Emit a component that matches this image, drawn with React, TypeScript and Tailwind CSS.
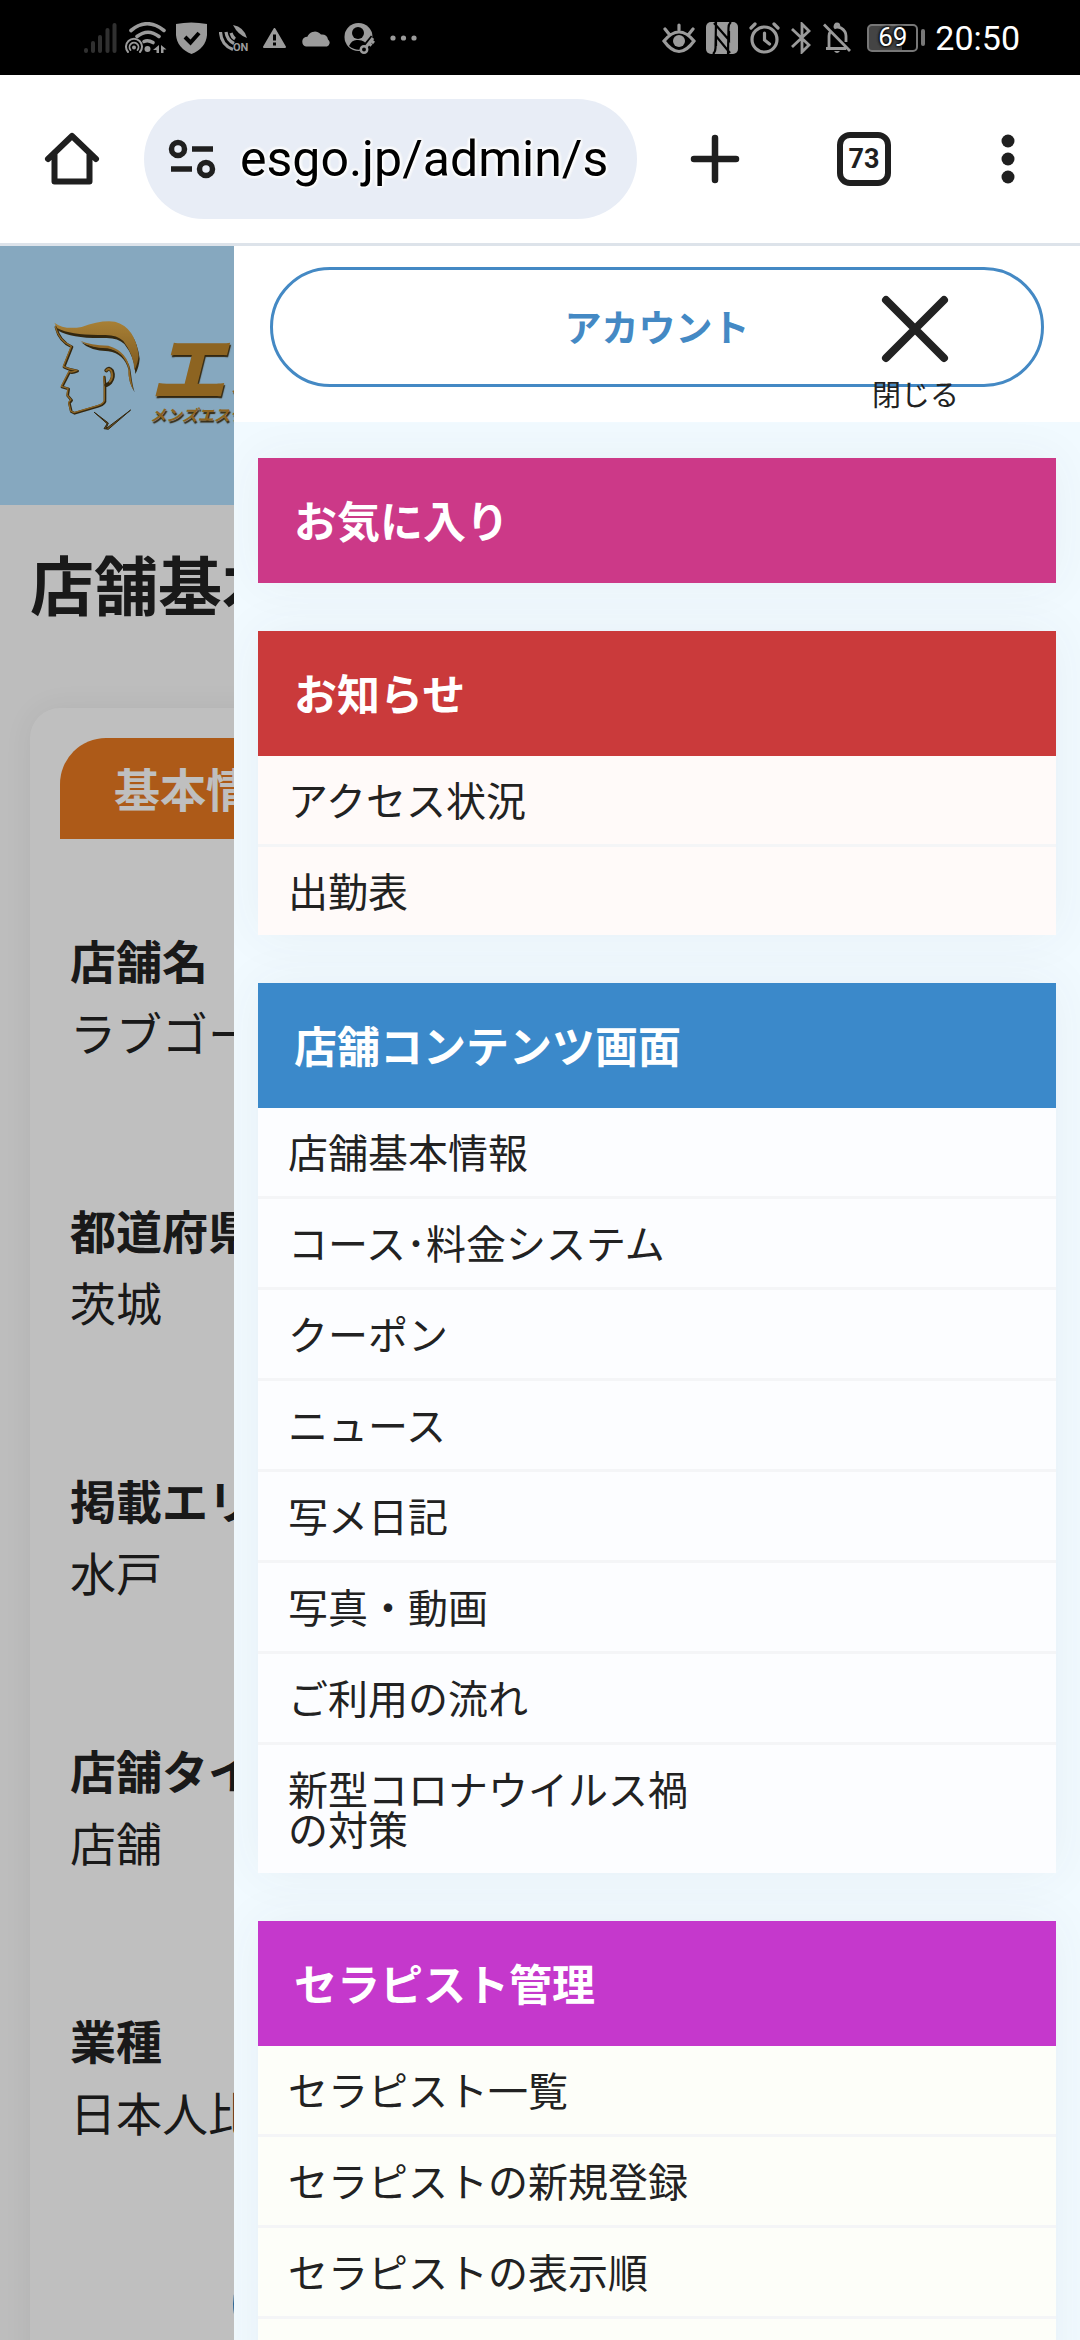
import React from "react";

const jp = "font-['Noto_Sans_CJK_JP',sans-serif]";

type Section = { title: string; head: string; body: string; items: string[] };

const sections: Section[] = [
  { title: "お気に入り", head: "bg-[#cc3988]", body: "bg-white", items: [] },
  {
    title: "お知らせ",
    head: "bg-[#ca3a3b]",
    body: "bg-[#fffaf9]",
    items: ["アクセス状況", "出勤表"],
  },
  {
    title: "店舗コンテンツ画面",
    head: "bg-[#3b89ca]",
    body: "bg-[#fcfdff]",
    items: [
      "店舗基本情報",
      "コース･料金システム",
      "クーポン",
      "ニュース",
      "写メ日記",
      "写真・動画",
      "ご利用の流れ",
      "新型コロナウイルス禍の対策",
    ],
  },
  {
    title: "セラピスト管理",
    head: "bg-[#c538cc]",
    body: "bg-[#fdfef9]",
    items: ["セラピスト一覧", "セラピストの新規登録", "セラピストの表示順", "セラピストの出勤"],
  },
];

const fields = [
  { label: "店舗名", value: "ラブゴー" },
  { label: "都道府県", value: "茨城" },
  { label: "掲載エリア", value: "水戸" },
  { label: "店舗タイプ", value: "店舗" },
  { label: "業種", value: "日本人比率" },
];

function StatusBar() {
  return (
    <div className="flex h-[75px] shrink-0 items-center justify-between bg-black pr-[60px] pl-[84px] text-[#9b9b9b]">
      <div className="flex items-center">
        <svg className="h-[32px] w-[33px]" viewBox="0 0 33 32" stroke="#303030" strokeWidth="4" strokeLinecap="round">
          <path d="M2 29v-1M9 29v-8M16 29V15M23.500 29V8M30.500 29V3" />
        </svg>
        <svg className="ml-[8px] h-[32px] w-[42px]" viewBox="0 0 42 32" fill="none" stroke="currentColor" strokeLinecap="round">
          <path d="M6 8.500Q22-5 39 8.500M12 14.500Q23 6 34 14.500" strokeWidth="3.600" />
          <path d="M19 19.500q4-2 9 1" strokeWidth="3.600" />
          <circle cx="22.500" cy="27" r="3" fill="currentColor" stroke="none" />
          <path d="M3 30a8 8 0 1 1 12 0" strokeWidth="2" />
          <path d="M5.500 28a4.500 4.500 0 1 1 7 0" strokeWidth="1.800" />
          <circle cx="9" cy="25.500" r="2" fill="currentColor" stroke="none" />
          <path d="M34 23v8h-2.500v-3H28zM36 23l5.500 4.500H38.500V31H36z" fill="currentColor" stroke="none" />
        </svg>
        <svg className="ml-[9px] h-[32px] w-[31px]" viewBox="0 0 31 32">
          <path d="M0 2Q15-1 31 2V13Q30 26 15.500 32Q1 26 0 13Z" fill="currentColor" />
          <path d="M9 15l5.500 5.500L23 11" fill="none" stroke="#000" strokeWidth="4" />
        </svg>
        <svg className="ml-[12px] h-[30px] w-[30px]" viewBox="0 0 30 30" fill="none" stroke="currentColor" strokeWidth="3.200">
          <path d="M1.500 9Q2 22 14 26.500M7 9q1 8 8 11.500M12 10q1 4 4 6" />
          <path d="M14 2Q25 4 28 15Q19 12 14 2z" fill="currentColor" stroke="none" />
          <text x="14" y="28" fontSize="11" fontWeight="700" fill="currentColor" stroke="none" fontFamily="Roboto">
            ON
          </text>
        </svg>
        <svg className="ml-[14px] h-[20px] w-[23px]" viewBox="0 0 23 20">
          <path d="M11.500 1L22 19H1Z" fill="currentColor" stroke="currentColor" strokeWidth="2" strokeLinejoin="round" />
          <path d="M11.500 6.500v6M11.500 14.500v3" stroke="#000" strokeWidth="3" />
        </svg>
        <svg className="ml-[15px] h-[18px] w-[31px]" viewBox="0 0 31 18" fill="currentColor">
          <path d="M5 17.500A5 5 0 0 1 4.500 8Q7 8 7 6.500A8 8 0 0 1 20 5.500Q26 5 27 10.500A4 4 0 0 1 26 17.500Z" />
        </svg>
        <svg className="ml-[12px] h-[32px] w-[32px]" viewBox="0 0 32 32">
          <circle cx="14.500" cy="15" r="14" fill="currentColor" />
          <circle cx="14" cy="11" r="6" fill="#000" />
          <path d="M5 24Q8 17 14 18Q22 18 23 25Q14 31 5 24Z" fill="#000" />
          <path d="M21 27L30 16" stroke="#000" strokeWidth="8" />
          <path d="M22 25L29 16M26 17.500l4 3.500M24 20.500l3.500 3" stroke="currentColor" strokeWidth="3" />
          <circle cx="20" cy="27.500" r="3.200" fill="#000" stroke="currentColor" strokeWidth="2.500" />
        </svg>
        <svg className="ml-[14px] h-[6px] w-[27px]" viewBox="0 0 27 6" fill="currentColor">
          <circle cx="3" cy="3" r="2.600" />
          <circle cx="13.500" cy="3" r="2.600" />
          <circle cx="24" cy="3" r="2.600" />
        </svg>
      </div>
      <div className="flex items-center">
        <svg className="h-[32px] w-[34px]" viewBox="0 0 34 32" fill="none" stroke="currentColor" strokeWidth="3.200" strokeLinecap="round">
          <path d="M2 19Q17 1 32 19Q17 40 2 19ZM17 3v5M3 7l4 5M31 7l-4 5" />
          <circle cx="17" cy="19" r="6" fill="currentColor" stroke="none" />
        </svg>
        <svg className="ml-[10px] h-[32px] w-[32px]" viewBox="0 0 32 32">
          <rect width="32" height="32" rx="5" fill="currentColor" />
          <path d="M10 0L9.500 26Q9.500 30 7 32M8 1L23 18V9M22 32L22.500 6Q22.500 2 25 0M24 31L10 14V24" stroke="#000" strokeWidth="2.200" fill="none" />
        </svg>
        <svg className="ml-[11px] h-[32px] w-[31px]" viewBox="0 0 31 32" fill="none" stroke="currentColor" strokeWidth="3.200" strokeLinecap="round">
          <circle cx="15.500" cy="17.500" r="12.500" />
          <path d="M15.500 11v7l5 4M2 6l4-4M29 6l-4-4" />
        </svg>
        <svg className="ml-[11px] h-[32px] w-[20px]" viewBox="0 0 20 32" fill="none" stroke="currentColor" strokeWidth="2.800">
          <path d="M1 7l17 16-7 7V2l7 7L1 25" />
        </svg>
        <svg className="ml-[12px] h-[32px] w-[28px]" viewBox="0 0 28 32" fill="none" stroke="currentColor" strokeWidth="2.800">
          <path d="M1 2.500L27 29M3 26.500H23M6 25V14Q6 11 8 9M11 6Q14 4 18 6Q23 9 23 14V20M12 5Q12 2 14 2T16 5" />
          <path d="M11 29h6q-3 4-6 0z" fill="currentColor" stroke="none" />
        </svg>
        <div className="ml-[16px] flex items-center gap-[3px]">
          <div className="flex h-[28px] w-[51px] items-center justify-center rounded-[5px] border-2 border-[#777] bg-linear-to-r from-[#444] from-70% to-black to-70% font-[Roboto] text-[26px] text-white [text-shadow:0_0_3px_#000,0_0_3px_#000,0_0_3px_#000]">
            69
          </div>
          <div className="h-[17px] w-[4px] rounded-[2px] bg-[#777]" />
        </div>
        <span className="ml-[10px] font-[Roboto] text-[34px] leading-none text-white">20:50</span>
      </div>
    </div>
  );
}

function Toolbar() {
  return (
    <div className="flex h-[171px] shrink-0 items-center border-b-3 border-[#dde3ea] bg-white pr-[57px] pl-[42px] text-[#1f1f1f]">
      <button type="button" aria-label="ホーム">
        <svg className="h-[60px] w-[60px]" viewBox="0 0 60 60" fill="none" stroke="currentColor" strokeWidth="6" strokeLinecap="round" strokeLinejoin="round">
          <path d="M6 30L30 7L54 30M12.500 25V52.500H47.500V25" />
        </svg>
      </button>
      <label className="ml-[42px] flex h-[120px] min-w-0 flex-1 items-center rounded-full bg-[#e8edf6] pr-[25px] pl-[24px]">
        <svg className="h-[42px] w-[48px] shrink-0" viewBox="0 0 48 42" fill="none" stroke="currentColor" strokeWidth="5.500">
          <circle cx="10" cy="11" r="6.500" />
          <circle cx="38" cy="31" r="6.500" />
          <path d="M24 11H45M3 31H24" />
        </svg>
        <input
          aria-label="アドレス"
          readOnly
          value="esgo.jp/admin/s"
          className="ml-[24px] h-[80px] w-full min-w-0 flex-1 bg-transparent font-[Roboto] text-[50px] text-black outline-none [text-shadow:0_0_4px_#fff,0_0_4px_#fff,0_0_4px_#fff,0_0_4px_#fff,0_0_4px_#fff]"
        />
      </label>
      <button type="button" aria-label="新しいタブ" className="ml-[48px]">
        <svg className="h-[60px] w-[60px]" viewBox="0 0 60 60" fill="none" stroke="currentColor" strokeWidth="6.500" strokeLinecap="round">
          <path d="M30 9V51M9 30H51" />
        </svg>
      </button>
      <button
        type="button"
        aria-label="タブ一覧"
        className="ml-[92px] flex h-[54px] w-[54px] items-center justify-center rounded-[13px] border-6 border-[#1f1f1f] font-[Roboto] text-[27px] font-bold"
      >
        73
      </button>
      <button type="button" aria-label="メニュー" className="ml-[102px]">
        <svg className="h-[60px] w-[30px]" viewBox="0 0 30 60" fill="currentColor">
          <circle cx="15" cy="12" r="6.500" />
          <circle cx="15" cy="30" r="6.500" />
          <circle cx="15" cy="48" r="6.500" />
        </svg>
      </button>
    </div>
  );
}

function Logo() {
  return (
    <div className="flex items-center">
      <svg className="h-[117px] w-[100px] shrink-0" viewBox="150 230 300 351" strokeLinejoin="round" strokeLinecap="round">
        <defs>
          <linearGradient id="gold" x1="0" y1="0" x2="0" y2="1">
            <stop offset="0" stopColor="#e0ab48" />
            <stop offset="1" stopColor="#a8772a" />
          </linearGradient>
        </defs>
        <g fill="#453515" transform="translate(3 5)">
          <path d="M163 249Q192 271 245 262Q300 241 345 246Q405 262 416 350Q414 376 403 396Q402 346 370 306Q350 286 310 288Q215 290 172 266Z" />
          <path d="M241 301Q270 316 325 318Q385 338 390 395Q394 430 401 451Q381 420 383 385Q370 335 322 328Q265 326 241 301Z" />
        </g>
        <path
          d="M168 261Q178 303 216 320L192 380Q206 388 233 392Q216 400 209 395L186 440L206 446L203 466L215 480L208 488L214 514L224 519L295 498Q318 490 315 477V432L313 410"
          fill="none"
          stroke="#453515"
          strokeWidth="8"
        />
        <path
          d="M166 259Q176 301 214 318L190 378Q204 386 231 390Q214 398 207 393L184 438L204 444L201 464L213 478L206 486L212 512L222 517L293 496Q316 488 313 475V430L311 408"
          fill="none"
          stroke="#bd8832"
          strokeWidth="4"
        />
        <path d="M163 247Q192 269 245 260Q300 239 345 244Q405 260 416 345Q414 371 403 390Q402 344 370 302Q350 282 310 284Q215 286 172 264Z" fill="url(#gold)" />
        <path d="M241 301Q270 314 325 316Q385 334 390 393Q394 428 401 451Q383 420 385 383Q370 332 322 324Q265 322 241 301Z" fill="#c08b35" />
        <path d="M319 390Q327 379 336 392Q343 410 331 426Q325 432 319 434" fill="none" stroke="#453515" strokeWidth="12" />
        <path d="M319 390Q327 381 334 392Q341 410 329 424" fill="none" stroke="#bd8832" strokeWidth="6" />
        <path d="M283 516L325 548L318 565L392 509L325 567L312 565L321 551Z" fill="#8f6c2c" stroke="#453515" strokeWidth="3" />
      </svg>
      <div className="flex flex-col whitespace-nowrap text-[#bd862c] italic [text-shadow:1px_2px_1px_#453515]">
        <span className="text-[76px] leading-[76px] font-black">エステ</span>
        <span className="text-[16px] leading-[24px] font-bold">メンズエステ</span>
      </div>
    </div>
  );
}

function ShopPage() {
  return (
    <div className="flex flex-col bg-[#fcfcfc] text-[#222]">
      <header className="flex h-[259px] items-center bg-[#b3e0ff] pl-[50px]">
        <Logo />
      </header>
      <h1 className="mt-[45px] ml-[30px] text-[64px] leading-[64px] font-bold whitespace-nowrap">店舗基本情報</h1>
      <section className="mx-[30px] mt-[94px] flex flex-col rounded-[30px] bg-white px-[30px] pt-[30px] pb-[80px] shadow-[0_0_30px_rgba(0,0,0,0.06)]">
        <h2 className="flex h-[101px] items-center rounded-t-[46px] bg-[#e77920] pb-[4px] pl-[54px] text-[46px] leading-none font-bold text-white">
          基本情報
        </h2>
        <dl className="mt-[97px] flex flex-col gap-[152px] pl-[10px] text-[46px] leading-[46px] whitespace-nowrap">
          {fields.map((f) => (
            <div key={f.label} className="flex flex-col gap-[26px]">
              <dt className="font-bold">{f.label}</dt>
              <dd>{f.value}</dd>
            </div>
          ))}
        </dl>
        <button type="button" className="mt-[120px] h-[100px] w-[614px] self-center rounded-full bg-[#3b89ca] text-[40px] font-bold text-white">
          変更する
        </button>
      </section>
    </div>
  );
}

function Drawer() {
  return (
    <aside className="absolute inset-y-0 right-0 left-[234px] flex flex-col overflow-hidden bg-[#f1faff] text-[#222]">
      <div className="relative shrink-0 bg-white px-[36px] pt-[21px] pb-[35px]">
        <button type="button" className="h-[120px] w-full rounded-full border-3 border-[#4489c4] bg-white text-[37px] font-bold text-[#4489c4]">
          アカウント
        </button>
        <button type="button" className="absolute top-[45px] right-[121px] flex flex-col items-center text-[29px] leading-[40px]">
          <svg className="h-[76px] w-[76px]" viewBox="0 0 76 76" fill="none" stroke="currentColor" strokeWidth="8" strokeLinecap="round">
            <path d="M9 9L67 67M67 9L9 67" />
          </svg>
          <span className="mt-[6px]">閉じる</span>
        </button>
      </div>
      <nav className="flex flex-col gap-[48px] px-[24px] pt-[36px]">
        {sections.map((s) => (
          <section key={s.title} className="shadow-[0_0_48px_rgba(60,60,90,0.06)]">
            <h2 className={`px-[36px] pt-[40px] pb-[42px] text-[43px] leading-[43px] font-bold text-white ${s.head}`}>{s.title}</h2>
            {s.items.length > 0 && (
              <ul className={`divide-y-3 divide-[#f4f5f7] ${s.body}`}>
                {s.items.map((item) => (
                  <li key={item}>
                    <a href="#" className="block px-[30px] pt-[23px] pb-[25px] text-[40px] leading-[40px]">
                      <span className="block max-w-[420px]">{item}</span>
                    </a>
                  </li>
                ))}
              </ul>
            )}
          </section>
        ))}
      </nav>
    </aside>
  );
}

export default function App() {
  return (
    <div className={`flex h-screen flex-col overflow-hidden ${jp}`} lang="ja">
      <StatusBar />
      <Toolbar />
      <main className="relative min-h-0 flex-1 overflow-hidden">
        <ShopPage />
        <div className="absolute inset-0 bg-black/25" />
        <Drawer />
      </main>
    </div>
  );
}
